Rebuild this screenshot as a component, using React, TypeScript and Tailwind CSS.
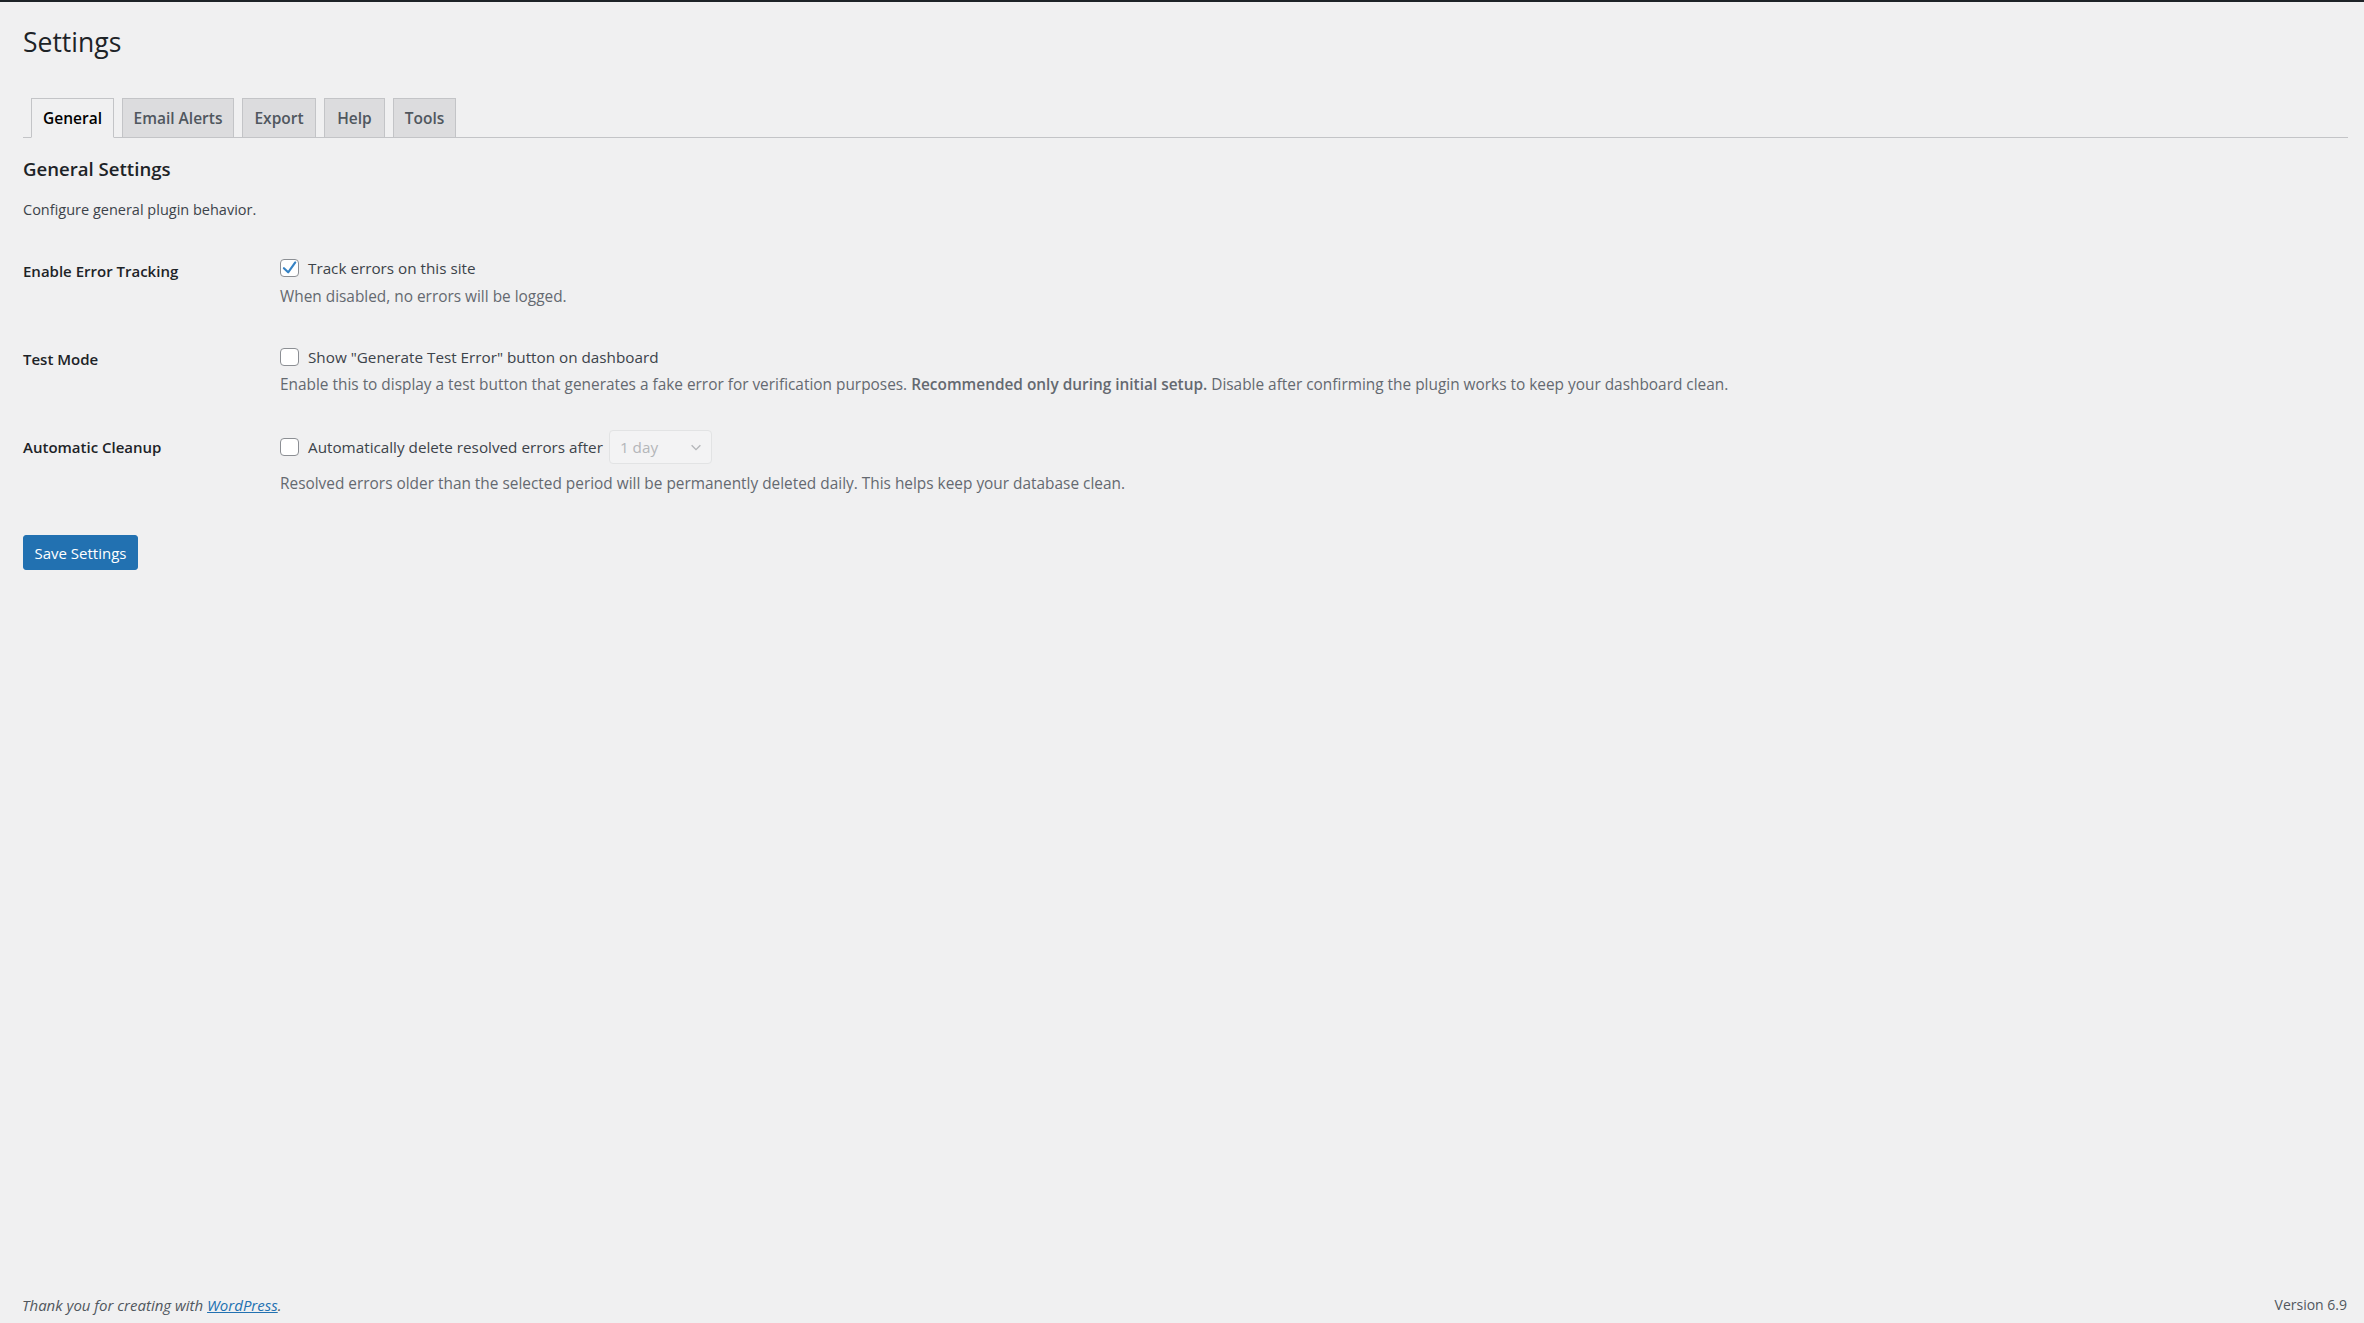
const tabs = [
  { label: "General", w: "w-[83px]", active: true },
  { label: "Email Alerts", w: "w-[112px]" },
  { label: "Export", w: "w-[74px]" },
  { label: "Help", w: "w-[61px]" },
  { label: "Tools", w: "w-[63px]" },
];

function Checkbox({ checked }: { checked?: boolean }) {
  return (
    <span className="relative flex h-[18px] w-[19px] shrink-0 items-center justify-center rounded-[4px] border border-[#8c8f94] bg-white">
      {checked && (
        <svg viewBox="0 0 19 18" className="absolute inset-0 h-full w-full">
          <path d="M3.2 9.2 L8 13.8 L16 2.8" fill="none" stroke="#3582c4" strokeWidth="2.4" strokeLinecap="round" strokeLinejoin="round" />
        </svg>
      )}
    </span>
  );
}

export default function App() {
  return (
    <div className="flex min-h-screen flex-col bg-[#f0f0f1] font-['Open_Sans',sans-serif] text-[15.25px] text-[#3c434a]">
      <div className="h-[2px] bg-[#1d2327]" />
      <div className="pl-[23px] pr-[16px]">
        <h1 className="mt-[23px] text-[26.5px] font-normal leading-[34px] text-[#1d2327]">Settings</h1>

        <nav className="mt-[39px] flex gap-[8px] border-b border-[#c3c4c7] pl-[8px]">
          {tabs.map((t) => (
            <a
              key={t.label}
              className={
                t.active
                  ? `${t.w} -mb-px border border-[#c3c4c7] border-b-[#f0f0f1] bg-[#f0f0f1] py-[6px] text-center text-[15.5px] font-semibold leading-[26px] text-black`
                  : `${t.w} -mb-px border border-[#c3c4c7] bg-[#dcdcde] py-[6px] text-center text-[15.5px] font-semibold leading-[26px] text-[#50575e]`
              }
            >
              {t.label}
            </a>
          ))}
        </nav>

        <h2 className="mt-[18px] text-[18.6px] font-semibold leading-[25px] text-[#1d2327]">General Settings</h2>
        <p className="mt-[18px] text-[14.5px] leading-[22px]">Configure general plugin behavior.</p>

        <div className="mt-[36px] flex">
          <div className="w-[257px] shrink-0 pt-[4px] text-[15px] font-semibold leading-[20px] text-[#1d2327]">Enable Error Tracking</div>
          <div>
            <label className="flex h-[22px] items-center gap-[9px] leading-[22px]">
              <Checkbox checked />
              Track errors on this site
            </label>
            <p className="mt-[7px] text-[15.4px] leading-[22px] text-[#646970]">When disabled, no errors will be logged.</p>
          </div>
        </div>

        <div className="mt-[38px] flex">
          <div className="w-[257px] shrink-0 pt-[3px] text-[15px] font-semibold leading-[20px] text-[#1d2327]">Test Mode</div>
          <div>
            <label className="flex h-[22px] items-center gap-[9px] leading-[22px]">
              <Checkbox />
              Show "Generate Test Error" button on dashboard
            </label>
            <p className="mt-[6px] text-[15.4px] leading-[22px] text-[#646970]">
              Enable this to display a test button that generates a fake error for verification purposes.{" "}
              <strong className="font-semibold">Recommended only during initial setup.</strong> Disable after confirming the plugin works to keep your dashboard clean.
            </p>
          </div>
        </div>

        <div className="mt-[34px] flex">
          <div className="w-[257px] shrink-0 pt-[7px] text-[15px] font-semibold leading-[20px] text-[#1d2327]">Automatic Cleanup</div>
          <div>
            <div className="flex h-[34px] items-center leading-[22px]">
              <label className="flex items-center gap-[9px]">
                <Checkbox />
                Automatically delete resolved errors after
              </label>
              <div className="ml-[6px] flex h-[34px] w-[103px] items-center justify-between rounded-[4px] border border-[#e2e3e4] bg-[#f3f3f4] pl-[10px] pr-[8px] text-[#b4b6b9]">
                <span>1 day</span>
                <svg viewBox="0 0 16 16" className="h-[14px] w-[14px]">
                  <path d="M3 6 L8 11 L13 6" fill="none" stroke="#b4b6b9" strokeWidth="1.6" />
                </svg>
              </div>
            </div>
            <p className="mt-[9px] text-[15.4px] leading-[22px] text-[#646970]">
              Resolved errors older than the selected period will be permanently deleted daily. This helps keep your database clean.
            </p>
          </div>
        </div>

        <button className="mt-[40px] h-[35px] w-[115px] rounded-[3px] border border-[#2271b1] bg-[#2271b1] text-[15px] leading-[22px] text-white">
          Save Settings
        </button>
      </div>

      <div className="mt-auto flex items-center justify-between pb-[7px] pl-[22px] pr-[17px] leading-[22px] text-[#50575e]">
        <p className="text-[15px] italic">
          Thank you for creating with{" "}
          <a className="text-[#2271b1] underline">WordPress</a>.
        </p>
        <p className="text-[14px]">Version 6.9</p>
      </div>
    </div>
  );
}
